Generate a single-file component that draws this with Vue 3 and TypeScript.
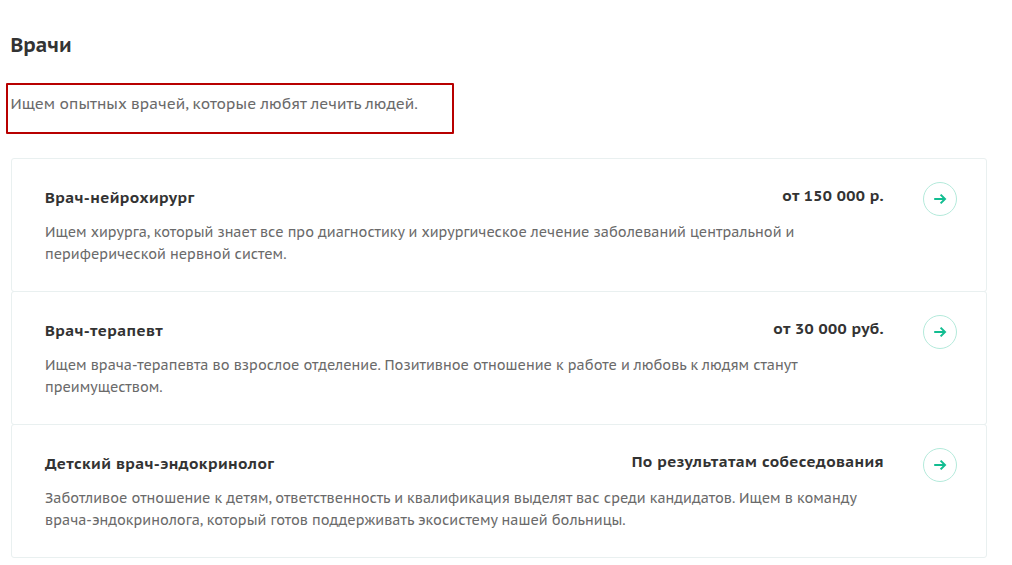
<script setup lang="ts">
interface Vacancy {
  id: string
  title: string
  salary: string
  text: string
}

const vacancies: Vacancy[] = [
  {
    id: 'neuro',
    title: 'Врач-нейрохирург',
    salary: 'от 150 000 р.',
    text: 'Ищем хирурга, который знает все про диагностику и хирургическое лечение заболеваний центральной и\nпериферической нервной систем.',
  },
  {
    id: 'therapist',
    title: 'Врач-терапевт',
    salary: 'от 30 000 руб.',
    text: 'Ищем врача-терапевта во взрослое отделение. Позитивное отношение к работе и любовь к людям станут\nпреимуществом.',
  },
  {
    id: 'endo',
    title: 'Детский врач-эндокринолог',
    salary: 'По результатам собеседования',
    text: 'Заботливое отношение к детям, ответственность и квалификация выделят вас среди кандидатов. Ищем в команду\nврача-эндокринолога, который готов поддерживать экосистему нашей больницы.',
  },
]
</script>

<template>
  <section class="vacancies">
    <h2 class="heading">Врачи</h2>
    <p class="intro">Ищем опытных врачей, которые любят лечить людей.</p>

    <div class="list">
      <article v-for="item in vacancies" :key="item.id" class="card">
        <div class="body">
          <div class="top">
            <h3 class="title">{{ item.title }}</h3>
            <span class="salary">{{ item.salary }}</span>
          </div>
          <p class="text">{{ item.text }}</p>
        </div>
        <a class="more" href="#" :aria-label="item.title">
          <svg width="14" height="12" viewBox="0 0 14 12" fill="none">
            <path d="M1.2 6H12M7.6 1.6L12 6L7.6 10.4" stroke="currentColor" stroke-width="2" />
          </svg>
        </a>
      </article>
    </div>
  </section>
</template>

<style>
body {
  margin: 0;
  background: #fff;
}
</style>

<style scoped>
.vacancies {
  box-sizing: border-box;
  height: 565px;
  padding: 30px 25px 0 6px;
  overflow: hidden;
  font-family: "PT Sans Caption", "PT Sans", "Noto Sans", sans-serif;
  color: #333;
}
.heading {
  margin: 0 0 23px 4.5px;
  font-size: 20px;
  line-height: 30px;
  font-weight: 700;
}
.intro {
  box-sizing: border-box;
  width: 448px;
  height: 51px;
  margin: 0;
  padding: 7px 0 0 2.5px;
  border: 2px solid #b80000;
  border-radius: 1px;
  font-size: 15px;
  line-height: 24px;
  letter-spacing: 0.05px;
  color: #6a6a6a;
  white-space: nowrap;
}
.list {
  margin: 24px 0 0 5px;
}
.card {
  box-sizing: border-box;
  display: flex;
  height: 134px;
  padding: 23px 29px 0 33px;
  border: 1px solid #e9f0f0;
  border-radius: 3px;
}
.card + .card { margin-top: -1px; }

.body {
  width: 839px;
  flex: none;
}
.top {
  display: flex;
  justify-content: space-between;
  height: 39px;
}
.title {
  margin: 3px 0 0;
  font-size: 15.4px;
  line-height: 24px;
  font-weight: 700;
  letter-spacing: 0.38px;
}
.salary {
  margin-top: 1px;
  font-size: 15.4px;
  line-height: 24px;
  font-weight: 700;
  letter-spacing: 0.36px;
}
.text {
  margin: 0;
  font-size: 14px;
  line-height: 22px;
  letter-spacing: 0.01px;
  color: #6a6a6a;
  white-space: pre;
}
.more {
  box-sizing: border-box;
  display: flex;
  align-items: center;
  justify-content: center;
  width: 34px;
  height: 34px;
  margin-left: auto;
  border: 1px solid #b4eadb;
  border-radius: 50%;
  color: #12bd91;
}
</style>
